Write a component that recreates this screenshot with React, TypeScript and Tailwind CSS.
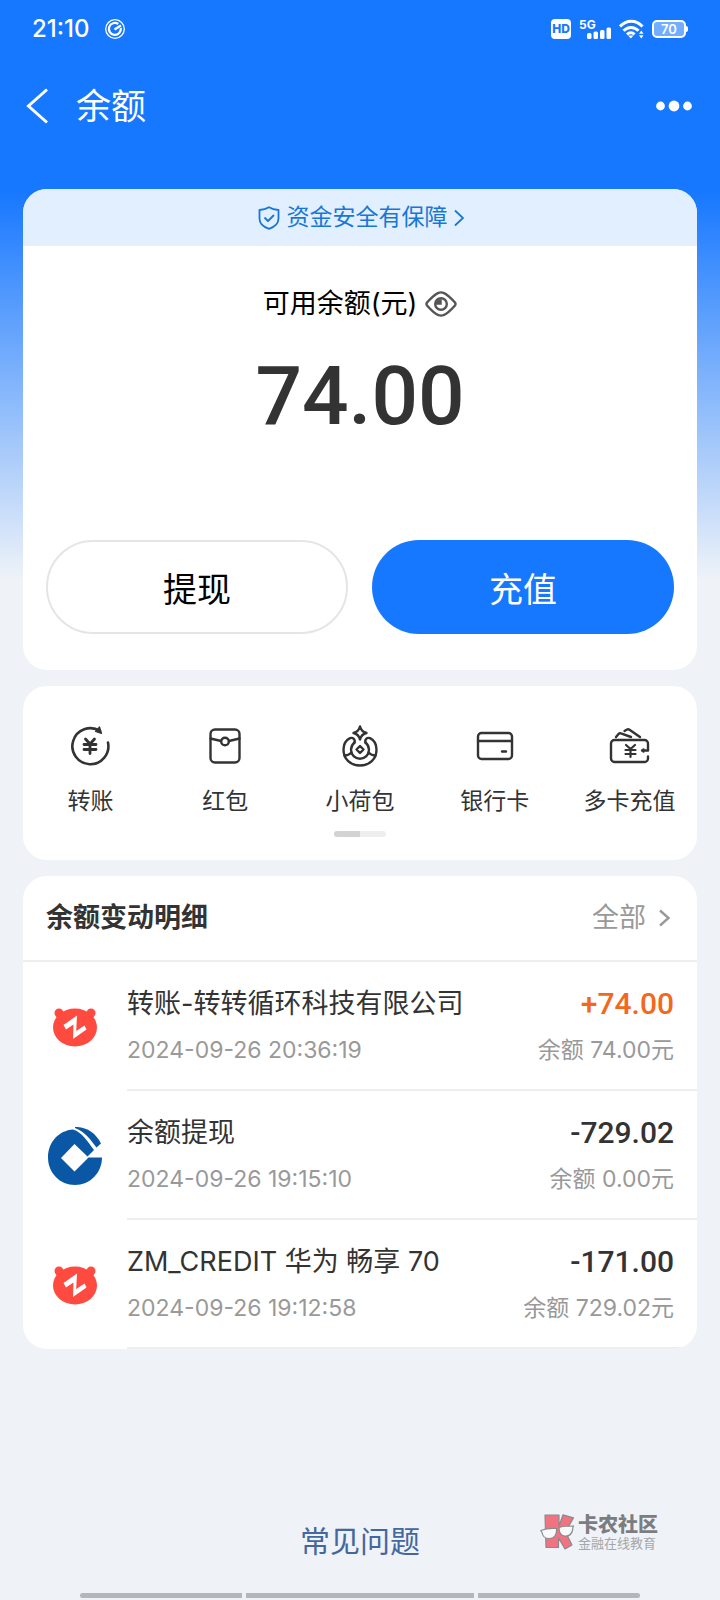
import type { ReactNode } from "react";
import clsx from "clsx";

interface Shortcut {
  label: string;
  icon: ReactNode;
}

interface BalanceRecord {
  id: number;
  logo: "zhuanzhuan" | "ccb";
  title: string;
  time: string;
  amount: string;
  balance: string;
  income?: boolean;
}

const RECORDS: BalanceRecord[] = [
  {
    id: 1,
    logo: "zhuanzhuan",
    title: "转账-转转循环科技有限公司",
    time: "2024-09-26 20:36:19",
    amount: "+74.00",
    balance: "余额 74.00元",
    income: true,
  },
  {
    id: 2,
    logo: "ccb",
    title: "余额提现",
    time: "2024-09-26 19:15:10",
    amount: "-729.02",
    balance: "余额 0.00元",
  },
  {
    id: 3,
    logo: "zhuanzhuan",
    title: "ZM_CREDIT 华为 畅享 70",
    time: "2024-09-26 19:12:58",
    amount: "-171.00",
    balance: "余额 729.02元",
  },
];

function ShortcutSvg({ children }: { children: ReactNode }) {
  return (
    <svg
      className="size-12 text-[#333333]"
      viewBox="0 0 48 48"
      fill="none"
      stroke="currentColor"
      strokeWidth={2.4}
      strokeLinecap="round"
      strokeLinejoin="round"
      aria-hidden="true"
    >
      {children}
    </svg>
  );
}

const SHORTCUTS: Shortcut[] = [
  {
    label: "转账",
    icon: (
      <ShortcutSvg>
        <path d="M34 9A18 18 0 1 0 42 20.500" strokeWidth={2.6} />
        <path d="M33.500 5l2 6.500-6-2z" fill="currentColor" strokeWidth={1.2} />
        <path d="M19.500 17l4.500 5 4.500-5M18 22.500h12M18 27.500h12M24 22.500v9" strokeWidth={2.8} />
      </ShortcutSvg>
    ),
  },
  {
    label: "红包",
    icon: (
      <ShortcutSvg>
        <rect x="9.500" y="7.500" width="29" height="33" rx="4.500" />
        <path d="M9.500 16.500l10.500 2.500M38.500 16.500L28 19" />
        <circle cx="24" cy="19.500" r="3.800" />
      </ShortcutSvg>
    ),
  },
  {
    label: "小荷包",
    icon: (
      <ShortcutSvg>
        <path d="M24 4.500c1 4 2.500 5.500 6.500 6.500-4 1-5.500 2.500-6.500 6.500-1-4-2.500-5.500-6.500-6.500 4-1 5.500-2.500 6.500-6.500z" />
        <path d="M18.500 20.500c1-3-1.500-5.500-4.500-4.300-4.500 2.200-6.500 7-6.500 11.500C7.500 37 14.500 43.500 24 43.500S40.500 37 40.500 27.700c0-4.500-2-9.300-6.500-11.500-3-1.200-5.500 1.300-4.500 4.300" />
        <path d="M18.500 20.500a10 10 0 0 0-3.500 7.200 9 9 0 0 0 18 0 10 10 0 0 0-3.500-7.200" />
        <path d="M8.500 33.500c2.500 0 5-1 7-3M39.500 33.500c-2.500 0-5-1-7-3" />
        <path d="M24 24l3.500 3.500L24 31l-3.500-3.500z" />
      </ShortcutSvg>
    ),
  },
  {
    label: "银行卡",
    icon: (
      <ShortcutSvg>
        <rect x="7" y="11" width="34" height="26" rx="3.500" />
        <path d="M7 19h34M31 29.500h4" />
      </ShortcutSvg>
    ),
  },
  {
    label: "多卡充值",
    icon: (
      <ShortcutSvg>
        <path d="M42 28V21.500a3.500 3.500 0 0 0-3.500-3.500h-30A3.500 3.500 0 0 0 5 21.500v15A3.500 3.500 0 0 0 8.500 40h30a3.500 3.500 0 0 0 3.500-3.500V34.500" />
        <path d="M42 28.500h-6M37.500 27.500v2" />
        <path d="M10 15l2.500-3c.8-.9 1.500-1 2.500-.6L25 15M18.500 9l2.500-1.500c.8-.5 1.600-.4 2.500.2L34 15" />
        <path d="M20 23l4.500 4 4.500-4M19.500 28h10M19.500 32h10M24.500 28v7" strokeWidth={2.2} />
      </ShortcutSvg>
    ),
  },
];

function ZhuanzhuanLogo() {
  return (
    <svg className="h-10 w-11" viewBox="0 0 44 40" aria-hidden="true">
      <g fill="#ff4a40">
        <circle cx="6" cy="6" r="4.500" />
        <circle cx="38" cy="6" r="4.500" />
        <ellipse cx="22" cy="20.500" rx="22" ry="19" />
      </g>
      <path
        d="M10.500 18L24 8.500l-.8 15.500 8.300-5.500 2 4L20 32l.5-14.500-7.500 5z"
        fill="#fff"
      />
    </svg>
  );
}

function CcbLogo() {
  return (
    <svg className="h-[58px] w-[54px]" viewBox="0 0 54 58" aria-hidden="true">
      <path
        d="M25 2.500C11 3.500 0 15 0 30.500 0 46 12 58 27 58s27-12 27-27.500H40.500L26.500 44.500 13 31 26.500 17 39.500 29.500l6.500-6.500C40 15 34 5 25 2.500z"
        fill="#0a58a5"
      />
      <path d="M27 0C38-.5 48 6 53 16.500L48.500 20.500C43 13 36 4 27 1z" fill="#0a58a5" />
    </svg>
  );
}

function StatusBar() {
  return (
    <div className="flex h-[58px] items-center justify-between px-8 text-white">
      <div className="flex items-center gap-4">
        <span className="text-2xl font-medium">21:10</span>
        <svg className="size-5" viewBox="0 0 20 20" fill="none" stroke="currentColor" aria-hidden="true">
          <circle cx="10" cy="10" r="9.300" strokeWidth={1.3} />
          <path d="M15.800 9a6 6 0 1 1-2.500-4" strokeWidth={2.2} />
          <path d="M9.500 10.500l6.500-4" strokeWidth={2.4} />
        </svg>
      </div>
      <div className="flex items-center gap-2">
        <span className="flex size-5 items-center justify-center rounded bg-white text-xs leading-none font-extrabold text-[#1677ff]">
          HD
        </span>
        <div className="relative h-5 w-8">
          <span className="absolute top-0 left-0 text-xs leading-none font-bold">5G</span>
          <svg className="h-5 w-8" viewBox="0 0 32 20" fill="currentColor" aria-hidden="true">
            <rect x="8" y="14" width="4.500" height="6" rx="1.500" />
            <rect x="14.500" y="12.500" width="4.500" height="7.500" rx="1.500" />
            <rect x="21" y="11" width="4.500" height="9" rx="1.500" />
            <rect x="27.500" y="8.500" width="4.500" height="11.500" rx="1.500" />
          </svg>
        </div>
        <svg className="h-5 w-[25px]" viewBox="0 0 25 20" fill="none" stroke="currentColor" strokeWidth={3} aria-hidden="true">
          <path d="M1 7.500C7.500.5 17 .5 23.500 7.500M4.500 11.800c4.500-4.500 10.500-4.500 15 0M8 15.500c2.200-2.200 5.500-2.200 7.500 0" />
          <path d="M9 16.500h5.500l-2.700 3z" fill="currentColor" stroke="none" />
          <path d="M20 14.800l2.300-3.300 2.200 3.300zM20 16.200h4.500L22.300 19.500z" fill="currentColor" stroke="none" />
        </svg>
        <div className="flex items-center">
          <span className="flex h-[18px] w-[34px] items-center justify-center rounded-[5px] border-2 border-white bg-white/40 text-[13px] leading-none font-semibold">
            70
          </span>
          <span className="h-1.5 w-0.5 rounded-r bg-white" />
        </div>
      </div>
    </div>
  );
}

function NavBar() {
  return (
    <header className="flex h-24 items-center px-6 text-white">
      <button type="button" aria-label="返回">
        <svg className="h-9 w-6" viewBox="0 0 24 36" fill="none" stroke="currentColor" strokeWidth={3} aria-hidden="true">
          <path d="M23 1.500L4.500 18 23 34.500" />
        </svg>
      </button>
      <h1 className="ml-7 text-[35px] leading-none">余额</h1>
      <button type="button" aria-label="更多" className="ml-auto">
        <svg className="h-3 w-10" viewBox="0 0 40 12" fill="currentColor" aria-hidden="true">
          <circle cx="4.500" cy="6" r="4.400" />
          <circle cx="18" cy="6" r="5.400" />
          <circle cx="31.500" cy="6" r="4.400" />
        </svg>
      </button>
    </header>
  );
}

function BalanceCard() {
  return (
    <section className="overflow-hidden rounded-3xl bg-white">
      <a href="#security" className="flex h-[57px] items-center justify-center gap-1.5 bg-[#e2efff] text-[23px] text-[#1677d8]">
        <svg className="h-6 w-6" viewBox="0 0 24 24" fill="none" stroke="currentColor" strokeWidth={1.8} strokeLinejoin="round" aria-hidden="true">
          <path d="M12 1.200c3 1.800 6 2.500 9.500 2.800v8.500c0 5-4 8.500-9.500 10.300C6.500 21 2.500 17.500 2.500 12.500V4C6 3.700 9 3 12 1.200z" />
          <path d="M7.500 11.500l3.500 3.500 6-6" />
        </svg>
        <span>资金安全有保障</span>
        <svg className="h-5 w-2.5" viewBox="0 0 10 20" fill="none" stroke="currentColor" strokeWidth={1.8} aria-hidden="true">
          <path d="M1 2.500l8 7.500-8 7.500" />
        </svg>
      </a>

      <div className="flex flex-col items-center pt-10">
        <div className="flex h-9 items-center gap-2 text-black">
          <span className="text-[27px]">可用余额(元)</span>
          <button type="button" aria-label="隐藏余额">
            <svg className="h-[26px] w-8" viewBox="0 0 32 26" fill="none" stroke="#555555" strokeWidth={2.4} aria-hidden="true">
              <path d="M2 11.500C6 7 10.500 3 13.500 1.800q2.500-.8 5 0C21.500 3 26 7 30 11.500q1 1.500 0 3C26 19 21.500 23 18.500 24.200q-2.500.8-5 0C10.500 23 6 19 2 14.500q-1-1.500 0-3z" />
              <circle cx="16" cy="13" r="5.800" />
              <path d="M16 9v4h-4.500A4.300 4.300 0 0 1 16 9z" fill="#555555" strokeWidth={1.5} />
            </svg>
          </button>
        </div>
        <p className="mt-6 font-[Roboto,sans-serif] text-[82px] leading-[100px] font-medium text-[#333333]">74.00</p>
      </div>

      <div className="mt-[94px] grid grid-cols-2 gap-6 px-[23px] pb-9 text-[34px]">
        <button type="button" className="h-[94px] rounded-full border-2 border-[#e5e5e5] pt-1 text-black">
          提现
        </button>
        <button type="button" className="h-[94px] rounded-full bg-[#1677ff] pt-1 text-white">
          充值
        </button>
      </div>
    </section>
  );
}

function Shortcuts() {
  return (
    <nav className="rounded-3xl bg-white pt-9 pb-[23px]">
      <ul className="grid grid-cols-5">
        {SHORTCUTS.map((item) => (
          <li key={item.label}>
            <a href="#" className="flex flex-col items-center gap-[13px] text-[23px] leading-9 whitespace-nowrap text-[#333333]">
              {item.icon}
              {item.label}
            </a>
          </li>
        ))}
      </ul>
      <div className="mx-auto mt-3 h-1.5 w-[52px] overflow-hidden rounded-sm bg-[#eeeeee]">
        <div className="h-full w-1/2 bg-[#d3d3d3]" />
      </div>
    </nav>
  );
}

function RecordItem({ record }: { record: BalanceRecord }) {
  return (
    <li className="flex">
      <div className="flex w-[104px] shrink-0 items-center justify-center">
        {record.logo === "ccb" ? <CcbLogo /> : <ZhuanzhuanLogo />}
      </div>
      <div className="flex h-[129px] flex-1 items-center justify-between border-b-2 border-[#eeeeee] pt-0.5 pr-[23px]">
        <div className="flex flex-col gap-2.5">
          <span className="text-[27px] leading-9 text-[#333333]">{record.title}</span>
          <time className="text-[23px] leading-9 text-[#999999]">{record.time}</time>
        </div>
        <div className="flex flex-col items-end gap-2.5">
          <span
            className={clsx(
              "font-[Roboto,sans-serif] text-[30px] leading-9 font-medium",
              record.income ? "text-[#f2681c]" : "text-[#333333]"
            )}
          >
            {record.amount}
          </span>
          <span className="text-[23px] leading-9 text-[#999999]">{record.balance}</span>
        </div>
      </div>
    </li>
  );
}

function RecordList() {
  return (
    <section className="overflow-hidden rounded-3xl bg-white">
      <div className="flex h-[86px] items-center justify-between border-b-2 border-[#eeeeee] px-[23px]">
        <h2 className="text-[27px] font-bold text-[#333333]">余额变动明细</h2>
        <a href="#all" className="flex items-center gap-3 text-[27px] text-[#999999]">
          全部
          <svg className="h-5 w-4" viewBox="0 0 16 20" fill="none" stroke="currentColor" strokeWidth={2.4} aria-hidden="true">
            <path d="M2 2.500l8.500 7.500L2 17.500" />
          </svg>
        </a>
      </div>
      <ul>
        {RECORDS.map((record) => (
          <RecordItem key={record.id} record={record} />
        ))}
      </ul>
    </section>
  );
}

function CommunityMark() {
  return (
    <div className="absolute right-[62px] bottom-[50px] flex items-center gap-1">
      <svg className="h-9 w-[34px]" viewBox="0 0 34 36" stroke="#8a8a8e" strokeWidth={1.2} strokeLinejoin="round" aria-hidden="true">
        <path d="M5 1h14v11L23 .8l10.500 3L25.500 18 32 31l-7 4-6.500-11v9.500H6z" fill="#ef7380" />
        <path d="M.8 16.500c5-2 10-2.500 15.700-2 .5 6-2 10-7.500 10-5 0-6.500-3-7-6zM19 13.500c5-1.500 9.500-1.500 14.500-1.500-.5 1-.8 2-1 4.500-1 4-4 6-8 5.500-3.500-.5-5.500-4-5.500-8.500z" fill="#f7f9fb" />
      </svg>
      <div className="flex flex-col gap-0.5">
        <span className="text-xl leading-5 font-black text-[#7c7d80]">卡农社区</span>
        <span className="text-[13px] leading-3 text-[#a4a6aa]">金融在线教育</span>
      </div>
    </div>
  );
}

export default function App() {
  return (
    <div className="flex min-h-screen flex-col bg-[#eff3f8] bg-[linear-gradient(to_bottom,#1677ff_190px,#eff3f8_580px)] font-[Inter,'Noto_Sans_CJK_SC',sans-serif]">
      <StatusBar />
      <NavBar />
      <main className="flex flex-col gap-4 px-[23px] pt-[35px]">
        <BalanceCard />
        <Shortcuts />
        <RecordList />
      </main>
      <footer className="relative mt-auto">
        <div className="flex justify-center pb-8">
          <a href="#faq" className="text-[30px] leading-10 text-[#43679f]">
            常见问题
          </a>
        </div>
        <CommunityMark />
        <div className="flex justify-center gap-1 px-20 pb-0.5">
          <span className="h-[5px] flex-5 rounded-l-full bg-[#b3b7bc]" />
          <span className="h-[5px] flex-7 bg-[#b3b7bc]" />
          <span className="h-[5px] flex-5 rounded-r-full bg-[#b3b7bc]" />
        </div>
      </footer>
    </div>
  );
}
